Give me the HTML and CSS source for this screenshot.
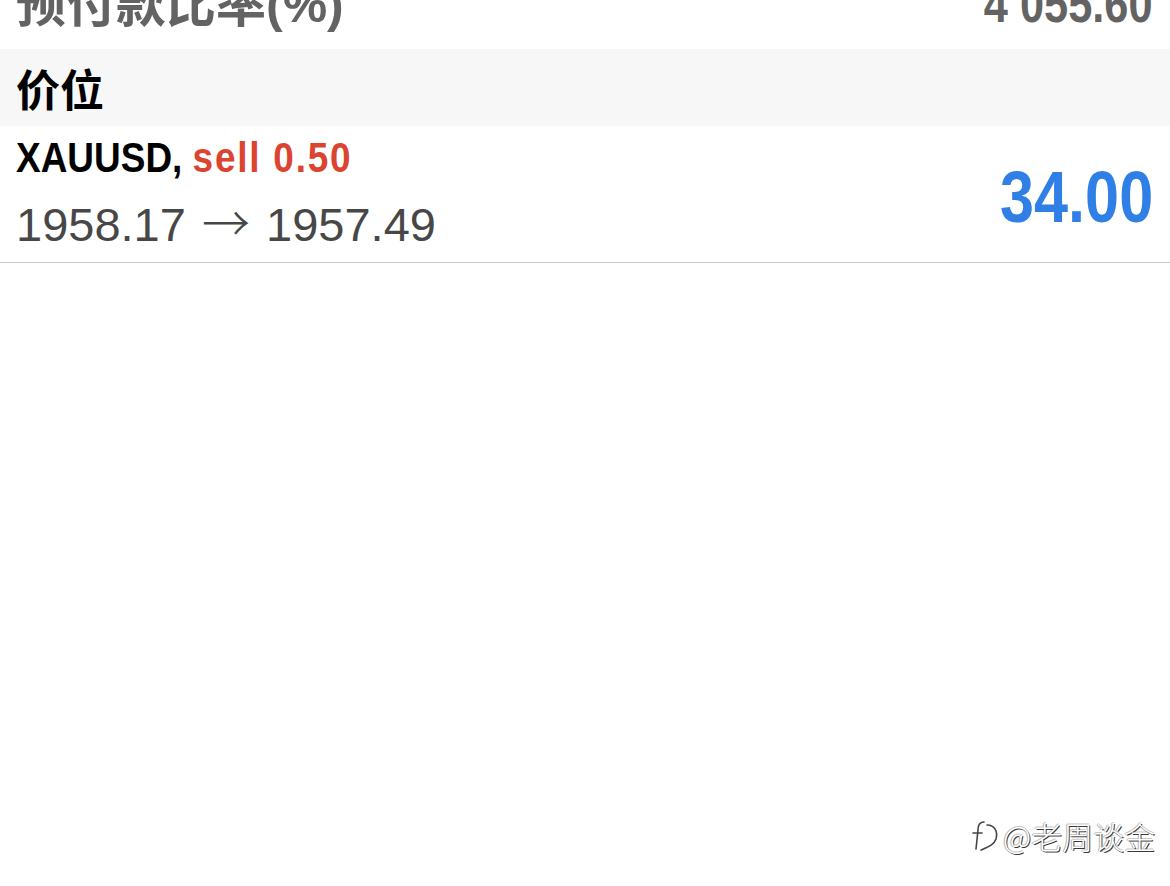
FILE: index.html
```html
<!DOCTYPE html>
<html lang="zh">
<head>
<meta charset="utf-8">
<title>价位</title>
<link rel="stylesheet" href="styles.css">
</head>
<body>
<div class="page">
  <div class="top-row">
    <div class="top-label">预付款比率(%)</div>
    <div class="top-value"><span class="cond-r">4 055.60</span></div>
  </div>
  <div class="section-header">价位</div>
  <div class="position-row">
    <div class="pos-left">
      <div class="pos-title"><span class="cond-l"><span class="sym">XAUUSD, </span><span class="side">sell 0.50</span></span></div>
      <div class="pos-prices">1958.17 <span class="arrow">→</span> 1957.49</div>
    </div>
    <div class="pos-profit"><span class="cond-r">34.00</span></div>
  </div>
  <div class="watermark">
    <svg class="wm-icon" width="30" height="34" viewBox="0 0 30 34" fill="none">
      <path d="M13 3 C8 3 7 7 7 11 L5 30" stroke="#444" stroke-width="1.6" stroke-linecap="round"/>
      <path d="M2 14 H11" stroke="#444" stroke-width="1.6" stroke-linecap="round"/>
      <path d="M16 6 C24 6 27 13 25 20 C23 26 17 28 10 31" stroke="#444" stroke-width="1.6" stroke-linecap="round"/>
    </svg>
    <span class="wm-text">@老周谈金</span>
  </div>
</div>
</body>
</html>
```

FILE: styles.css
```css
html, body {
  margin: 0;
  padding: 0;
  background: #ffffff;
}

body {
  font-family: "Liberation Sans", "Noto Sans CJK SC", sans-serif;
  width: 1170px;
  height: 886px;
  overflow: hidden;
}

.page {
  position: relative;
  width: 1170px;
  height: 886px;
  background: #ffffff;
}

.top-row {
  height: 49px;
  display: flex;
  align-items: flex-start;
  justify-content: space-between;
  padding: 0 17px 0 16px;
  overflow: hidden;
  color: #636363;
  font-weight: 700;
}

.top-label {
  font-size: 50px;
  line-height: 50px;
  margin-top: -20px;
  white-space: nowrap;
}

.top-value {
  font-size: 51px;
  line-height: 50px;
  margin-top: -20px;
  white-space: nowrap;
}

.cond-r {
  display: inline-block;
  transform: scaleX(0.85);
  transform-origin: right center;
  white-space: nowrap;
}

.cond-l {
  display: inline-block;
  transform: scaleX(0.88);
  transform-origin: left center;
  white-space: nowrap;
}

.section-header {
  height: 77px;
  background: #f7f7f7;
  display: flex;
  align-items: center;
  padding-left: 16px;
  font-size: 44px;
  font-weight: 700;
  color: #000000;
}

.position-row {
  display: flex;
  align-items: flex-start;
  padding: 0 17px 0 16px;
  border-bottom: 1px solid #c8c8c8;
}

.pos-left {
  padding: 7px 0 9px 0;
}

.pos-title {
  font-size: 42px;
  line-height: 50px;
  font-weight: 700;
  color: #000000;
  white-space: nowrap;
}

.side {
  color: #db4431;
  letter-spacing: 2px;
}

.pos-prices {
  margin-top: 14px;
  font-size: 47px;
  line-height: 56px;
  color: #474747;
  white-space: nowrap;
}

.arrow {
  display: inline-block;
  margin: 0 3px;
  font-family: "Noto Sans CJK SC", sans-serif;
  font-size: 48px;
  line-height: 40px;
  font-weight: 300;
}

.pos-profit {
  margin-left: auto;
  margin-top: 35px;
  font-size: 72px;
  line-height: 72px;
  font-weight: 700;
  color: #2f7fe6;
  white-space: nowrap;
}

.watermark {
  position: absolute;
  left: 971px;
  top: 818px;
  display: flex;
  align-items: center;
  gap: 2px;
}

.wm-icon {
  display: block;
}

.wm-text {
  font-family: "Noto Sans CJK SC", sans-serif;
  font-size: 31px;
  line-height: 36px;
  font-weight: 300;
  color: #ffffff;
  text-shadow: 1px 1px 0 #3a3a3a, -1px 0 0 #b0b0b0, 0 -1px 0 #c8c8c8;
}
```
